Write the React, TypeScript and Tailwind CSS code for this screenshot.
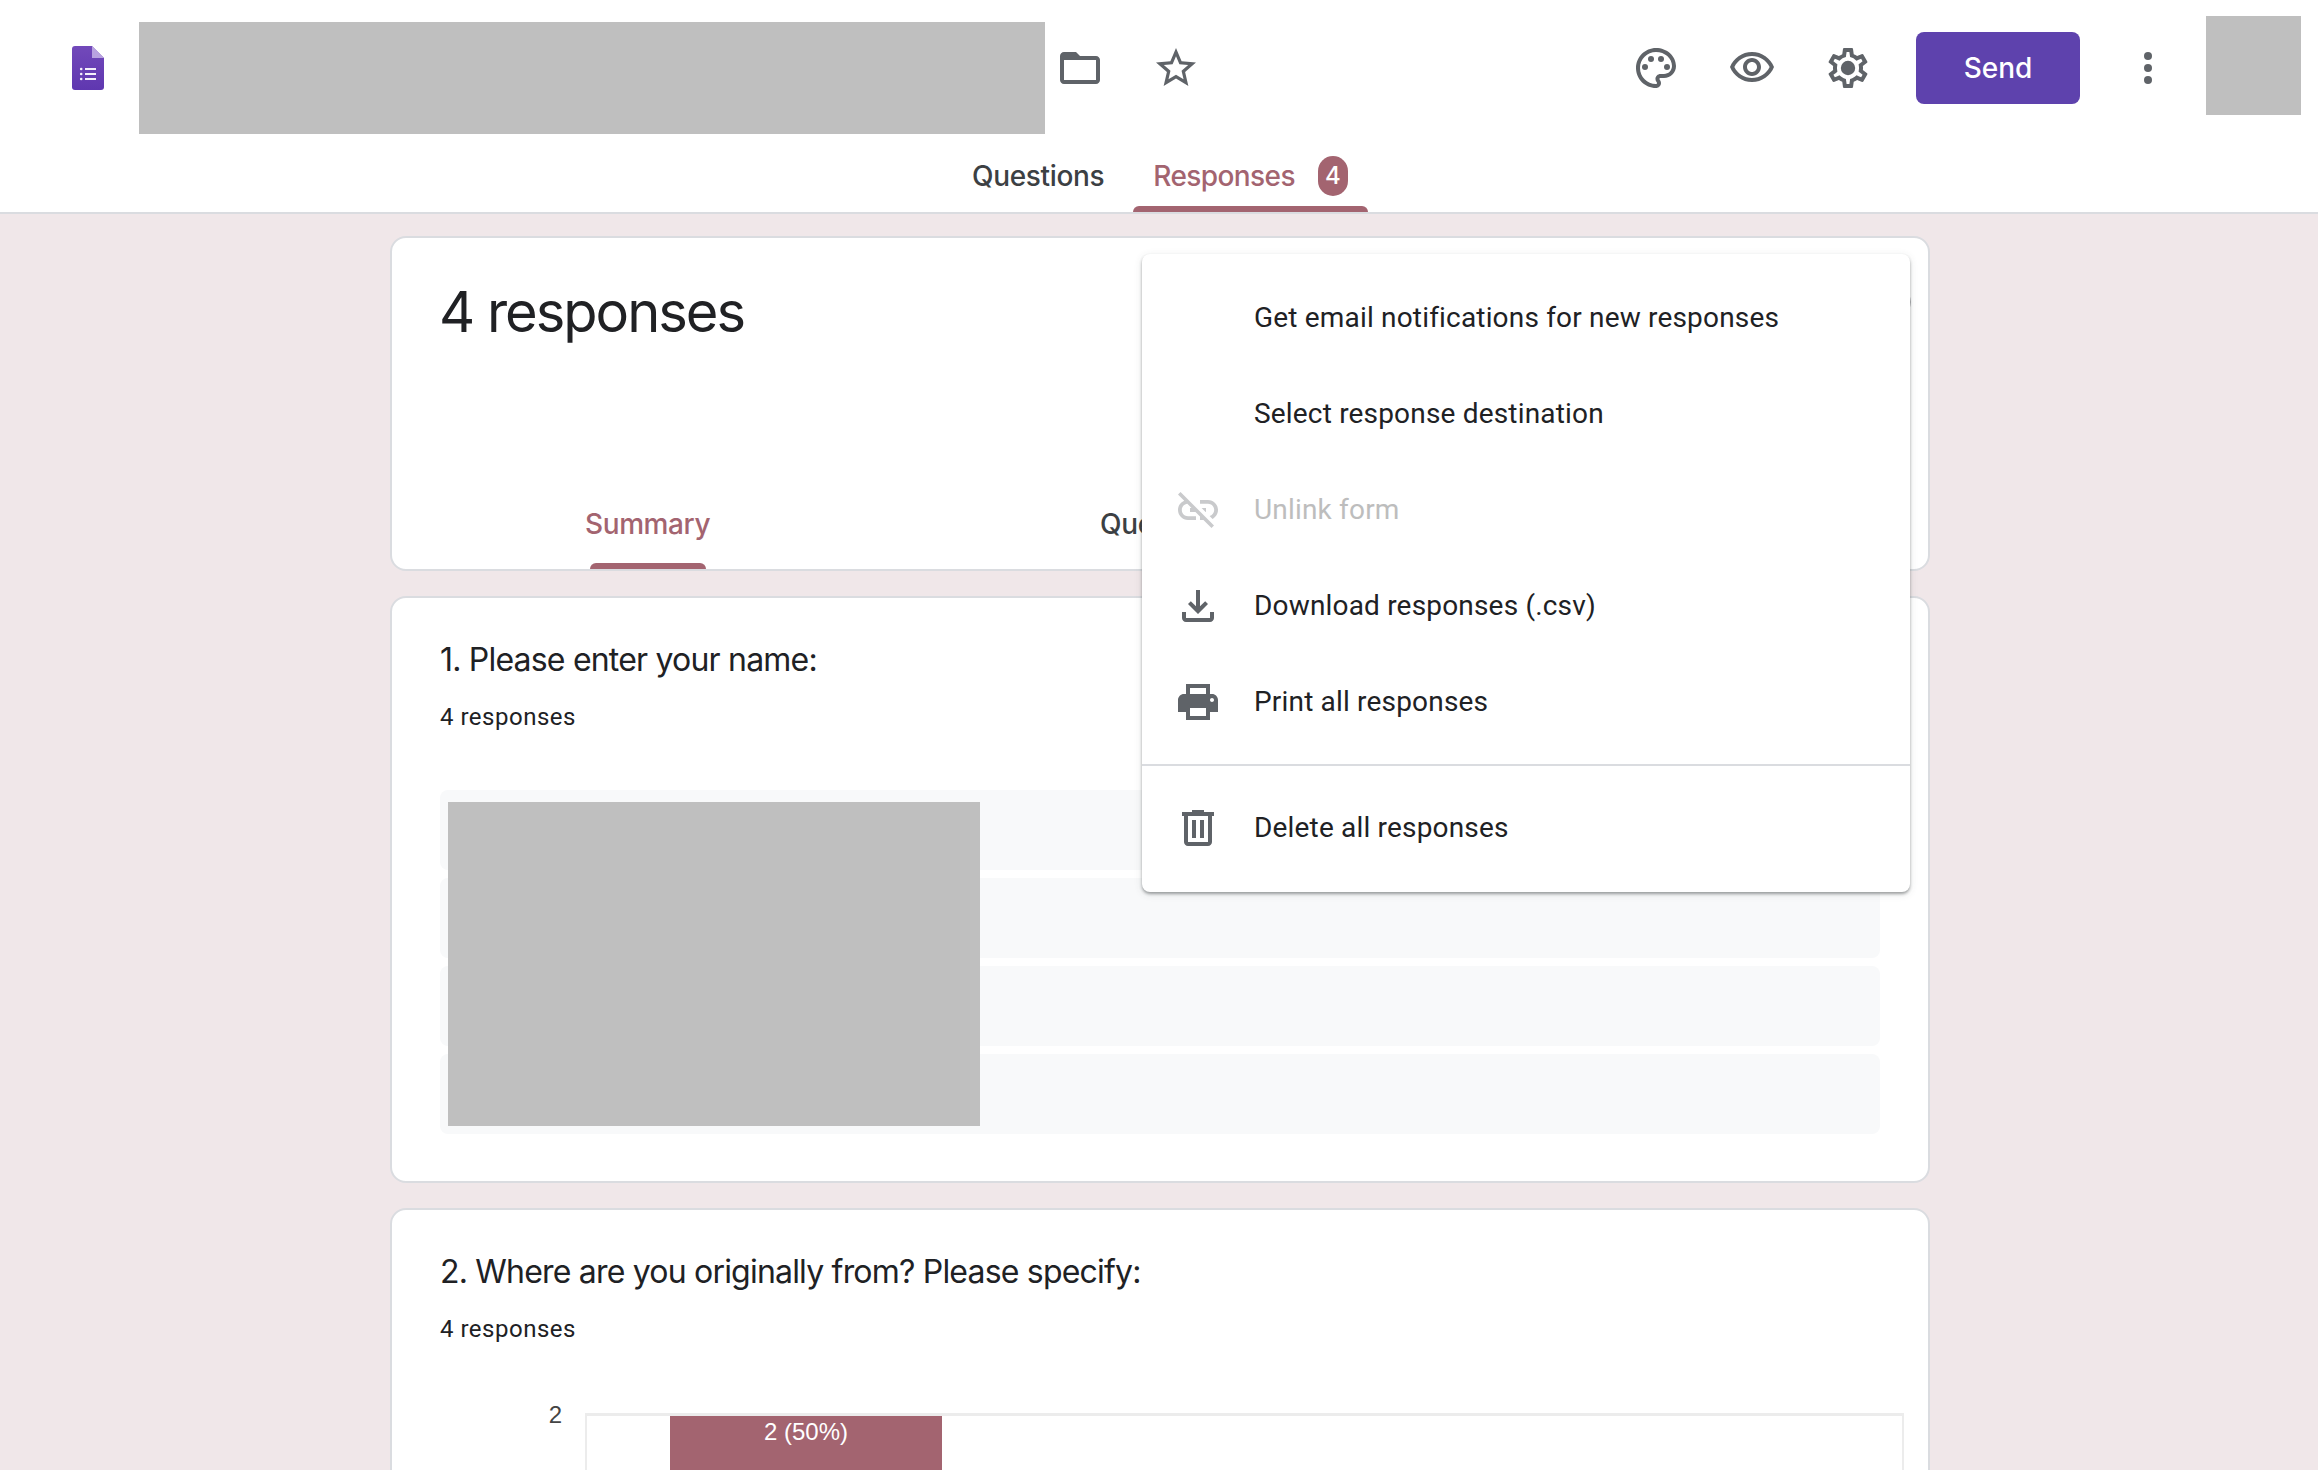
import type { ReactNode } from 'react';

const roboto = "font-['Roboto',sans-serif]";
const sans = "font-['Inter',sans-serif]";

function Icon({ d, className = 'fill-[#5f6368]', children }: { d?: string; className?: string; children?: ReactNode }) {
  return (
    <svg viewBox="0 0 24 24" className={`w-12 h-12 shrink-0 ${className}`}>
      {d && <path d={d} />}
      {children}
    </svg>
  );
}

const paths = {
  folder: 'M20 6h-8l-2-2H4c-1.1 0-2 .9-2 2v12c0 1.1.9 2 2 2h16c1.1 0 2-.9 2-2V8c0-1.1-.9-2-2-2zm0 12H4V8h16v10z',
  star: 'M22 9.24l-7.19-.62L12 2 9.19 8.63 2 9.24l5.46 4.73L5.82 21 12 17.27 18.18 21l-1.63-7.03L22 9.24zM12 15.4l-3.76 2.27 1-4.28-3.32-2.88 4.38-.38L12 6.1l1.71 4.04 4.38.38-3.32 2.88 1 4.28L12 15.4z',
  palette: 'M12 22C6.49 22 2 17.51 2 12S6.49 2 12 2s10 4.04 10 9c0 3.31-2.69 6-6 6h-1.77c-.28 0-.5.22-.5.5 0 .12.05.23.13.33.41.47.64 1.06.64 1.67 0 1.38-1.12 2.5-2.5 2.5zm0-18c-4.41 0-8 3.59-8 8s3.59 8 8 8c.28 0 .5-.22.5-.5 0-.16-.08-.28-.14-.35-.41-.46-.63-1.05-.63-1.65 0-1.38 1.12-2.5 2.5-2.5H16c2.21 0 4-1.79 4-4 0-3.86-3.59-7-8-7z',
  eye: 'M12 6c3.79 0 7.17 2.13 8.82 5.5C19.17 14.87 15.79 17 12 17s-7.17-2.13-8.82-5.5C4.83 8.13 8.21 6 12 6m0-2C7 4 2.73 7.11 1 11.5 2.73 15.89 7 19 12 19s9.27-3.11 11-7.5C21.27 7.11 17 4 12 4zm0 5c1.38 0 2.5 1.12 2.5 2.5S13.38 14 12 14s-2.5-1.12-2.5-2.5S10.62 9 12 9m0-2c-2.48 0-4.5 2.02-4.5 4.5S9.52 16 12 16s4.5-2.02 4.5-4.5S14.48 7 12 7z',
  gear: 'M19.43 12.98c.04-.32.07-.64.07-.98 0-.34-.03-.66-.07-.98l2.11-1.65c.19-.15.24-.42.12-.64l-2-3.46c-.09-.16-.26-.25-.44-.25-.06 0-.12.01-.17.03l-2.49 1c-.52-.4-1.08-.73-1.69-.98l-.38-2.65C14.46 2.18 14.25 2 14 2h-4c-.25 0-.46.18-.49.42l-.38 2.65c-.61.25-1.17.59-1.69.98l-2.49-1c-.06-.02-.12-.03-.18-.03-.17 0-.34.09-.43.25l-2 3.46c-.13.22-.07.49.12.64l2.11 1.65c-.04.32-.07.65-.07.98 0 .33.03.66.07.98l-2.11 1.65c-.19.15-.24.42-.12.64l2 3.46c.09.16.26.25.44.25.06 0 .12-.01.17-.03l2.49-1c.52.4 1.08.73 1.69.98l.38 2.65c.03.24.24.42.49.42h4c.25 0 .46-.18.49-.42l.38-2.65c.61-.25 1.17-.59 1.69-.98l2.49 1c.06.02.12.03.18.03.17 0 .34-.09.43-.25l2-3.46c.12-.22.07-.49-.12-.64l-2.11-1.65zm-1.98-1.71c.04.31.05.52.05.73 0 .21-.02.43-.05.73l-.14 1.13.89.7 1.08.84-.7 1.21-1.27-.51-1.04-.42-.9.68c-.43.32-.84.56-1.25.73l-1.06.43-.16 1.13-.2 1.35h-1.4l-.19-1.35-.16-1.13-1.06-.43c-.43-.18-.83-.41-1.23-.71l-.91-.7-1.06.43-1.27.51-.7-1.21 1.08-.84.89-.7-.14-1.13c-.03-.31-.05-.54-.05-.74s.02-.43.05-.73l.14-1.13-.89-.7-1.08-.84.7-1.21 1.27.51 1.04.42.9-.68c.43-.32.84-.56 1.25-.73l1.06-.43.16-1.13.2-1.35h1.39l.19 1.35.16 1.13 1.06.43c.43.18.83.41 1.23.71l.91.7 1.06-.43 1.27-.51.7 1.21-1.07.85-.89.7.14 1.13z',
  linkOff: 'M17 7h-4v1.9h4c1.71 0 3.1 1.39 3.1 3.1 0 1.43-.98 2.63-2.31 2.98l1.46 1.46C20.88 15.61 22 13.95 22 12c0-2.76-2.24-5-5-5zm-1 4h-2.19l2 2H16zM2 4.27l3.11 3.11C3.29 8.12 2 9.91 2 12c0 2.76 2.24 5 5 5h4v-1.9H7c-1.71 0-3.1-1.39-3.1-3.1 0-1.59 1.21-2.9 2.76-3.07L8.73 11H8v2h2.73L13 15.27V17h1.73l4.01 4L20 19.74 3.27 3 2 4.27z',
  download: 'M18 15v3H6v-3H4v3c0 1.1.9 2 2 2h12c1.1 0 2-.9 2-2v-3h-2zm-1-4l-1.41-1.41L13 12.17V4h-2v8.17L8.41 9.59 7 11l5 5 5-5z',
  print: 'M19 8h-1V3H6v5H5c-1.66 0-3 1.34-3 3v6h4v4h12v-4h4v-6c0-1.66-1.34-3-3-3zM8 5h8v3H8V5zm8 14H8v-4h8v4zm3-7c-.55 0-1-.45-1-1s.45-1 1-1 1 .45 1 1-.45 1-1 1z',
  trash: 'M15 4V3H9v1H4v2h1v13c0 1.1.9 2 2 2h10c1.1 0 2-.9 2-2V6h1V4h-5zm2 15H7V6h10v13zM9 8h2v9H9zm4 0h2v9h-2z',
};

function FormsLogo() {
  return (
    <svg viewBox="0 0 32 44" className="w-8 h-11 shrink-0">
      <defs>
        <linearGradient id="formsBody" x1="0" y1="0" x2="0" y2="1">
          <stop offset="0" stopColor="#7249ba" />
          <stop offset="1" stopColor="#5f37b0" />
        </linearGradient>
      </defs>
      <path d="M3 0h17l12 12v29a3 3 0 0 1-3 3H3a3 3 0 0 1-3-3V3a3 3 0 0 1 3-3z" fill="url(#formsBody)" />
      <path d="M20 0l12 12H20z" fill="#b9a3e0" />
      <g fill="#f3effa">
        <circle cx="9.2" cy="23" r="1.3" />
        <circle cx="9.2" cy="28" r="1.3" />
        <circle cx="9.2" cy="33" r="1.3" />
        <rect x="13" y="22" width="11" height="2" />
        <rect x="13" y="27" width="11" height="2" />
        <rect x="13" y="32" width="11" height="2" />
      </g>
    </svg>
  );
}

function Header() {
  return (
    <header className="bg-white border-b-2 border-[#dadce0] h-[214px] shrink-0 flex flex-col">
      <div className="flex items-start h-[138px] pl-[72px]">
        <div className="mt-[46px]"><FormsLogo /></div>
        <div className="w-[906px] h-[112px] mt-[22px] ml-[35px] bg-[#bfbfbf]" />
        <div className="flex items-center mt-[44px] ml-[11px] gap-[48px]">
          <Icon d={paths.folder} />
          <Icon d={paths.star} />
        </div>
        <div className="flex items-center mt-[44px] ml-[432px] gap-[48px]">
          <Icon d={paths.palette}>
            <circle cx="6.5" cy="11.5" r="1.5" />
            <circle cx="9.5" cy="7.5" r="1.5" />
            <circle cx="14.5" cy="7.5" r="1.5" />
            <circle cx="17.5" cy="11.5" r="1.5" />
          </Icon>
          <Icon d={paths.eye} />
          <Icon d={paths.gear}>
            <circle cx="12" cy="12" r="3.6" />
          </Icon>
        </div>
        <button className={`w-[164px] h-[72px] mt-[32px] ml-[44px] rounded-[8px] bg-[#5e42ad] text-white text-[28px] font-medium ${sans}`}>
          Send
        </button>
        <div className="mt-[44px] ml-[44px]">
          <Icon>
            <circle cx="12" cy="6" r="2" />
            <circle cx="12" cy="12" r="2" />
            <circle cx="12" cy="18" r="2" />
          </Icon>
        </div>
        <div className="w-[95px] h-[99px] mt-[16px] ml-[34px] bg-[#bfbfbf]" />
      </div>
      <nav className={`flex flex-1 ml-[972px] text-[28px] font-medium ${sans}`}>
        <div className="text-[#3c4043] pt-[18px] leading-[40px] tracking-[-0.33px]">Questions</div>
        <div className="relative ml-[29px] pt-[18px] leading-[40px] text-[#a36470] flex items-start w-[235px] pl-[20px]">
          <span className="tracking-[-0.6px]">Responses</span>
          <span className="ml-[23px] w-[30px] h-[40px] rounded-full bg-[#a36470] text-white text-[24px] text-center leading-[40px]">4</span>
          <div className="absolute left-0 right-0 bottom-0 h-[6px] bg-[#a36470] rounded-t-[6px]" />
        </div>
      </nav>
    </header>
  );
}

function MenuItem({ label, d, disabled }: { label: string; d?: string; disabled?: boolean }) {
  return (
    <div className="h-[96px] flex items-center pl-[32px]">
      <div className="w-[48px] h-[48px] shrink-0">
        {d && <Icon d={d} className={disabled ? 'fill-[#c9cacc]' : 'fill-[#5f6368]'} />}
      </div>
      <span className={`ml-[32px] text-[28px] tracking-[0.18px] ${roboto} ${disabled ? 'text-[#bdbdbd]' : 'text-[#202124]'}`}>{label}</span>
    </div>
  );
}

function Menu() {
  return (
    <div className="absolute left-[752px] top-[18px] w-[768px] h-[638px] bg-white rounded-[8px] pt-[16px] z-10 shadow-[0_2px_3px_rgba(60,64,67,0.45),0_2px_8px_rgba(60,64,67,0.12)]">
      <MenuItem label="Get email notifications for new responses" />
      <MenuItem label="Select response destination" />
      <MenuItem label="Unlink form" d={paths.linkOff} disabled />
      <MenuItem label="Download responses (.csv)" d={paths.download} />
      <MenuItem label="Print all responses" d={paths.print} />
      <div className="h-[2px] bg-[#dadce0] my-[14px]" />
      <MenuItem label="Delete all responses" d={paths.trash} />
    </div>
  );
}

function Card({ className, children }: { className: string; children: ReactNode }) {
  return <section className={`bg-white border-2 border-[#dadce0] rounded-[16px] ${className}`}>{children}</section>;
}

function QuestionHead({ title }: { title: string }) {
  return (
    <>
      <h2 className={`text-[32px] leading-[40px] tracking-[-0.8px] text-[#202124] ${sans}`}>{title}</h2>
      <p className={`mt-[21px] text-[24px] leading-[32px] tracking-[0.5px] text-[#202124] ${roboto}`}>4 responses</p>
    </>
  );
}

export default function App() {
  return (
    <div className="h-screen overflow-hidden bg-[#f0e7e9] flex flex-col">
      <Header />
      <main className="relative ml-[390px] w-[1540px] mt-[22px] flex flex-col gap-[25px]">
        {/* Summary card */}
        <Card className="h-[335px] relative">
          <h1 className={`absolute left-[47px] top-[38px] text-[56px] leading-[72px] tracking-[-2px] text-[#202124] ${sans}`}>4 responses</h1>
          <div className={`absolute left-[193px] top-[266px] text-[28px] leading-[40px] tracking-[-0.4px] font-medium text-[#a36470] ${sans}`}>Summary</div>
          <div className={`absolute left-[708px] top-[266px] text-[28px] leading-[40px] tracking-[-0.33px] font-medium text-[#3c4043] ${sans}`}>Question</div>
          <div className="absolute left-[198px] bottom-0 w-[116px] h-[6px] bg-[#a36470] rounded-t-[6px]" />
          <div className="absolute right-[17px] top-[44px] w-[60px] h-[40px] rounded-[50%] bg-[#b4b5b8]" />
        </Card>

        {/* Names, hidden behind the grey block */}
        <Card className="h-[587px] pl-[48px] pt-[42px]">
          <QuestionHead title="1. Please enter your name:" />
          <div className="relative w-[1440px] mt-[57px] flex flex-col gap-[8px]">
            <div className="h-[80px] rounded-[8px] bg-[#f8f9fa]" />
            <div className="h-[80px] rounded-[8px] bg-[#f8f9fa]" />
            <div className="h-[80px] rounded-[8px] bg-[#f8f9fa]" />
            <div className="h-[80px] rounded-[8px] bg-[#f8f9fa]" />
            <div className="absolute left-[8px] top-[12px] w-[532px] h-[324px] bg-[#bfbfbf]" />
          </div>
        </Card>

        {/* Origin chart */}
        <Card className="h-[400px] pl-[48px] pt-[42px]">
          <QuestionHead title="2. Where are you originally from? Please specify:" />
          <div className="mt-[68px] flex items-start gap-[23px]">
            <span className="w-[122px] -mt-[12px] text-right text-[24px] leading-[28px] text-[#444] font-['Liberation_Sans',sans-serif] shrink-0">2</span>
            <div className="w-[1319px] h-[200px] border-t-[3px] border-x-2 border-[#ececec] pl-[83px]">
              <div className="w-[272px] h-[200px] bg-[#a36470] text-white text-center text-[24px] leading-[32px] font-['Liberation_Sans',sans-serif]">2 (50%)</div>
            </div>
          </div>
        </Card>

        <Menu />
      </main>
    </div>
  );
}
